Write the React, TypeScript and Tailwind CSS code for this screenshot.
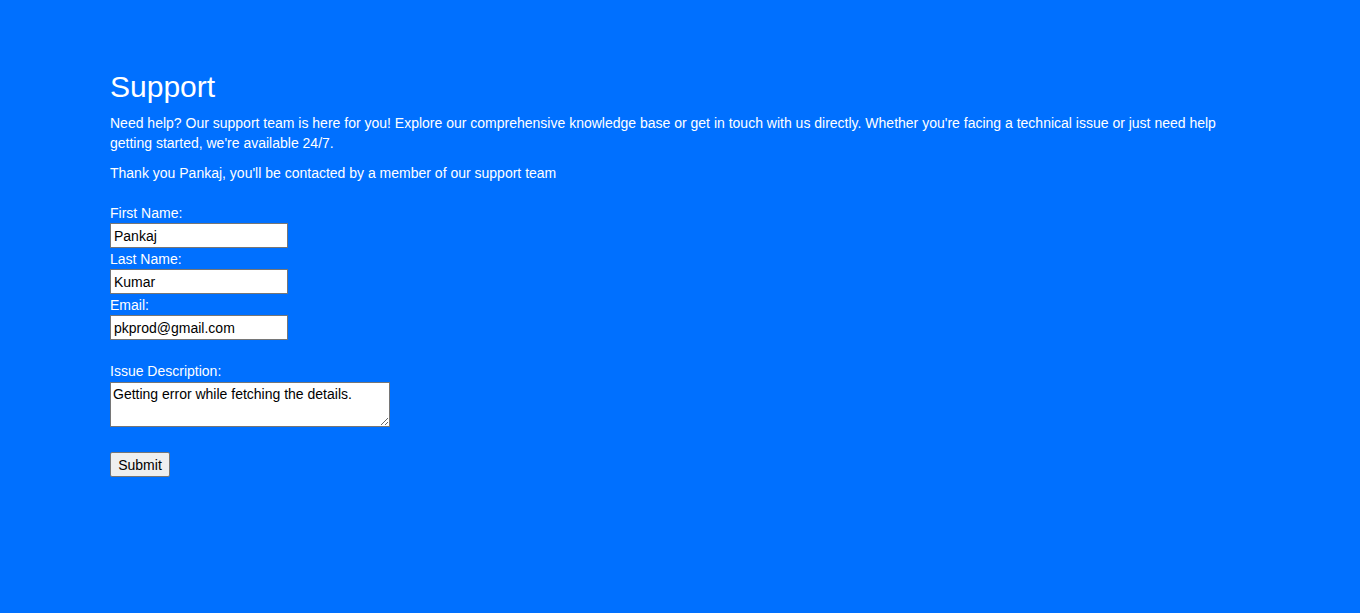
import React, { useState } from 'react';

const font = { fontFamily: '"Liberation Sans", Arial, sans-serif' };

export default function App() {
    const [form, setForm] = useState({
        first: 'Pankaj',
        last: 'Kumar',
        email: 'pkprod@gmail.com',
        issue: 'Getting error while fetching the details.',
    });

    const fieldCls =
        'block w-[178px] h-[25px] bg-white border border-[#767676] px-[3px] text-[14px] text-black outline-none';

    return (
        <div style={font} className="min-h-screen bg-[#0070ff] text-white px-[110px] pt-[70px]">
            <h1 className="text-[30px] leading-[34px] font-normal mb-[9px]">Support</h1>
            <p className="text-[14px] leading-[20px]">
                Need help? Our support team is here for you! Explore our comprehensive knowledge base or get in touch with us directly. Whether you're facing a technical issue or just need help getting started, we're available 24/7.
            </p>
            <p className="text-[14px] leading-[20px] mt-[10px]">
                Thank you Pankaj, you'll be contacted by a member of our support team
            </p>

            <form className="mt-[19px] flex flex-col items-start text-[14px]" onSubmit={(e) => e.preventDefault()}>
                <label className="leading-[21px] pt-[1px] h-[21px]">First Name:</label>
                <input
                    style={font}
                    className={fieldCls}
                    value={form.first}
                    onChange={(e) => setForm({ ...form, first: e.target.value })}
                />
                <label className="leading-[21px] pt-[1px] h-[21px]">Last Name:</label>
                <input
                    style={font}
                    className={fieldCls}
                    value={form.last}
                    onChange={(e) => setForm({ ...form, last: e.target.value })}
                />
                <label className="leading-[21px] pt-[1px] h-[21px]">Email:</label>
                <input
                    style={font}
                    className={fieldCls}
                    value={form.email}
                    onChange={(e) => setForm({ ...form, email: e.target.value })}
                />

                <label className="leading-[21px] mt-[21px]">Issue Description:</label>
                <textarea
                    style={font}
                    className="block w-[280px] h-[45px] bg-white border border-[#767676] px-[2px] pt-[3px] pb-[1px] text-[14px] leading-[16px] text-black outline-none"
                    value={form.issue}
                    onChange={(e) => setForm({ ...form, issue: e.target.value })}
                />

                <button
                    type="submit"
                    style={font}
                    className="mt-[25px] h-[25px] w-[60px] pt-[1px] bg-[#efefef] border border-[#767676] rounded-[2px] text-[14px] text-black"
                >
                    Submit
                </button>
            </form>
        </div>
    );
}
